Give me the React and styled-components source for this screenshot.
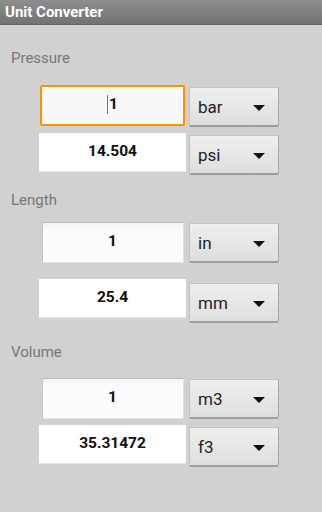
import styled, { createGlobalStyle } from "styled-components";

const GlobalStyle = createGlobalStyle`
  html, body {
    margin: 0;
    padding: 0;
    background: #d1d1d1;
  }
  body {
    font-family: Roboto, "Liberation Sans", sans-serif;
  }
`;

const Screen = styled.div`
  width: 322px;
  height: 512px;
  background: #d1d1d1;
  overflow: hidden;
`;

const TitleBar = styled.div`
  height: 25px;
  box-sizing: border-box;
  padding-left: 5px;
  display: flex;
  align-items: center;
  background: linear-gradient(#8e8e8e, #727272);
  border-bottom: 1px solid #646464;
  color: #ffffff;
  font-size: 15px;
  font-weight: 700;
`;

const Content = styled.div`
  padding: 24px 0 0 11px;
`;

const Label = styled.div`
  height: 18px;
  line-height: 18px;
  margin-top: ${(p) => p.$top || 0}px;
  color: #777777;
  font-size: 15px;
`;

const Row = styled.div`
  display: flex;
  align-items: flex-start;
  margin-top: ${(p) => p.$top}px;
  margin-left: 28px;
`;

const Field = styled.div`
  width: 147px;
  display: flex;
  justify-content: center;
`;

const Box = styled.div`
  box-sizing: border-box;
  display: flex;
  align-items: center;
  justify-content: center;
  padding-bottom: 3px;
  font-size: 15.5px;
  font-weight: 700;
  color: #111111;
  ${(p) =>
    p.$kind === "focused"
      ? `
    width: 145px;
    height: 41px;
    background: #f8f8f8;
    border: 2px solid #ff9100;
    border-radius: 2px;
  `
      : p.$kind === "edit"
      ? `
    width: 142px;
    height: 41px;
    background: linear-gradient(#f4f4f4, #fbfbfb 20%, #fcfcfc);
    border-top: 1px solid #b9b9b9;
    border-left: 1px solid #c4c4c4;
    border-right: 1px solid #e0e0e0;
    border-bottom: 1px solid #e4e4e4;
  `
      : `
    width: 147px;
    height: 39px;
    background: #ffffff;
    border-bottom: 1px solid #e6e6e6;
  `}
`;

const Caret = styled.span`
  display: inline-block;
  width: 1px;
  height: 19px;
  margin-right: 1px;
  background: #777777;
`;

const Spinner = styled.div`
  box-sizing: border-box;
  width: 90px;
  height: 40px;
  margin-left: 3px;
  margin-top: ${(p) => p.$offset}px;
  padding: 0 13px 0 8px;
  display: flex;
  align-items: center;
  justify-content: space-between;
  background: linear-gradient(#efefef, #dedede);
  border: 1px solid #c2c2c2;
  border-bottom: 2px solid #9e9e9e;
  border-right: 1px solid #a8a8a8;
  border-radius: 2px;
  color: #1e1e1e;
  font-size: 17px;
`;

const Arrow = styled.span`
  width: 0;
  height: 0;
  margin-top: 3px;
  border-left: 6px solid transparent;
  border-right: 6px solid transparent;
  border-top: 6px solid #111111;
`;

const sections = [
  {
    label: "Pressure",
    labelTop: 0,
    rows: [
      { value: "1", unit: "bar", kind: "focused", top: 18, offset: 2 },
      { value: "14.504", unit: "psi", kind: "result", top: 6, offset: 2 },
    ],
  },
  {
    label: "Length",
    labelTop: 16,
    rows: [
      { value: "1", unit: "in", kind: "edit", top: 13, offset: 1 },
      { value: "25.4", unit: "mm", kind: "result", top: 16, offset: 4 },
    ],
  },
  {
    label: "Volume",
    labelTop: 20,
    rows: [
      { value: "1", unit: "m3", kind: "edit", top: 17, offset: 1 },
      { value: "35.31472", unit: "f3", kind: "result", top: 6, offset: 2 },
    ],
  },
];

export default function App() {
  return (
    <Screen>
      <GlobalStyle />
      <TitleBar>Unit Converter</TitleBar>
      <Content>
        {sections.map((s) => (
          <div key={s.label}>
            <Label $top={s.labelTop}>{s.label}</Label>
            {s.rows.map((r) => (
              <Row key={r.unit} $top={r.top}>
                <Field>
                  <Box $kind={r.kind}>
                    {r.kind === "focused" && <Caret />}
                    {r.value}
                  </Box>
                </Field>
                <Spinner $offset={r.offset}>
                  {r.unit}
                  <Arrow />
                </Spinner>
              </Row>
            ))}
          </div>
        ))}
      </Content>
    </Screen>
  );
}
